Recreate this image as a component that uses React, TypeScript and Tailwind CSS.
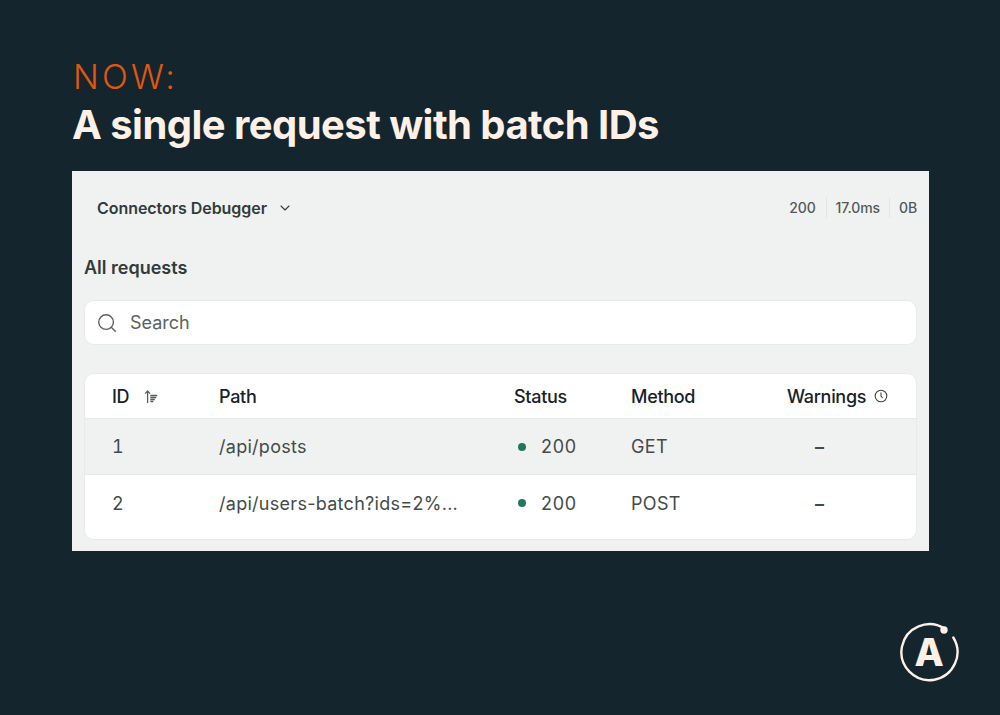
import { ChevronDown, Search } from 'lucide-react';

const rows = [
  { id: '1', path: '/api/posts', status: '200', method: 'GET', warnings: '–', shaded: true },
  { id: '2', path: '/api/users-batch?ids=2%...', status: '200', method: 'POST', warnings: '–', shaded: false },
];

const SortIcon = () => (
  <svg width="14" height="15" viewBox="0 0 14 15" fill="none" stroke="#565e5d" strokeWidth="1.3">
    <path d="M3.6 14V2M1.2 4.6 3.6 1.9 6 4.6" />
    <path d="M6.3 6.5h7M6.3 8.5h6M6.3 10.5h4.5M6.3 12.5h3" />
  </svg>
);

const ClockIcon = () => (
  <svg width="14" height="14" viewBox="0 0 14 14" fill="none" stroke="#3d4544" strokeWidth="1.1">
    <circle cx="7" cy="7" r="5.8" />
    <path d="M7 3.6V7l1.6 2" />
  </svg>
);

const Logo = () => (
  <svg width="60" height="60" viewBox="0 0 60 60" fill="none" className="absolute right-[41px] bottom-[33px]">
    <path
      d="M45.6 6.6A28 28 0 1 0 54.3 15.5"
      stroke="#fdf0e6"
      strokeWidth="2.4"
      strokeLinecap="round"
    />
    <circle cx="45" cy="8" r="3.7" fill="#fdf0e6" />
    <text x="30" y="43.5" textAnchor="middle" fontSize="38" fontWeight="800" fill="#fdf0e6" fontFamily="Inter, sans-serif">
      A
    </text>
  </svg>
);

export default function App() {
  return (
    <div className="relative flex h-[715px] w-[1000px] flex-col overflow-hidden bg-[#15252d] pt-[56px] font-['Inter',sans-serif]">
      <div className="pl-[73px]">
        <div className="text-[34px] leading-[41px] font-light tracking-[3.2px] text-[#e2570f]">NOW:</div>
        <h1 className="mt-[4px] text-[40px] leading-[48px] font-bold tracking-[-0.55px] text-[#fdf0e6] ml-[-1px]">A single request with batch IDs</h1>
      </div>

      <div className="mt-[22px] ml-[72px] flex h-[380px] w-[857px] flex-col bg-[#f0f2f1] px-[12px]">
        <div className="flex h-[74px] items-center justify-between">
          <div className="flex items-center gap-[10px] pl-[13px] text-[#333b3a]">
            <span className="text-[16px] font-semibold tracking-[-0.05px]">Connectors Debugger</span>
            <ChevronDown size={16} strokeWidth={1.6} />
          </div>
          <div className="mt-[-2px] flex items-center text-[14px] font-medium tracking-[-0.1px] text-[#525a59]">
            <span className="border-r border-[#e2e5e4] pr-[10px]">200</span>
            <span className="border-r border-[#e2e5e4] px-[9px]">17.0ms</span>
            <span className="pl-[9px]">0B</span>
          </div>
        </div>

        <div className="mt-[11px] text-[18px] leading-[24px] font-semibold text-[#333b3a]">All requests</div>

        <div className="mt-[20px] flex h-[45px] items-center gap-[12px] rounded-[10px] border border-[#e8ebea] bg-white pl-[11px] text-[18px] text-[#5a6261]">
          <Search size={22} strokeWidth={1.5} />
          <span>Search</span>
        </div>

        <div className="mt-[28px] h-[167px] overflow-hidden rounded-[10px] border border-[#e8ebea] bg-white text-[18px]">
          <div className="flex h-[45px] items-center border-b border-[#e6e9e8] font-medium tracking-[-0.3px] text-[#17222a]">
            <div className="flex w-[134px] items-center gap-[15px] pl-[27px]">
              <span>ID</span>
              <SortIcon />
            </div>
            <div className="w-[295px]">Path</div>
            <div className="w-[117px]">Status</div>
            <div className="w-[156px]">Method</div>
            <div className="flex items-center gap-[8px]">
              <span>Warnings</span>
              <ClockIcon />
            </div>
          </div>
          {rows.map((row) => (
            <div
              key={row.id}
              className={
                row.shaded
                  ? 'flex h-[56px] items-center border-b border-[#e6e9e8] bg-[#f0f2f1] text-[#434b4a]'
                  : 'flex h-[56px] items-center bg-white text-[#434b4a]'
              }
            >
              <div className="w-[134px] pl-[27px] [font-feature-settings:'tnum']">{row.id}</div>
              <div className="w-[295px] tracking-[0.28px]">{row.path}</div>
              <div className="flex w-[117px] items-center gap-[15px] tracking-[0.7px]">
                <span className="ml-[4px] h-[8px] w-[8px] rounded-full bg-[#1f7a58]" />
                <span>{row.status}</span>
              </div>
              <div className="w-[156px] tracking-[0.35px]">{row.method}</div>
              <div className="pl-[28px] font-semibold">{row.warnings}</div>
            </div>
          ))}
        </div>
      </div>

      <Logo />
    </div>
  );
}
